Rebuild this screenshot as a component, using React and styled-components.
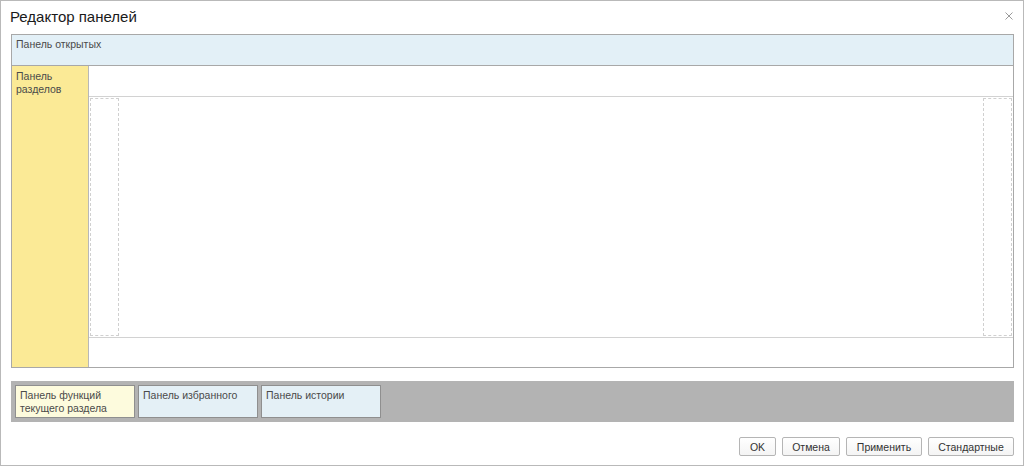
import React from 'react';
import styled, { createGlobalStyle } from 'styled-components';

const GlobalStyle = createGlobalStyle`
    html, body {
        margin: 0;
        padding: 0;
        background: #ffffff;
    }

    body {
        font-family: "Liberation Sans", Arial, sans-serif;
    }
`;

const Window = styled.div`
    box-sizing: border-box;
    width: 1024px;
    height: 466px;
    border: 1px solid #b9b9b9;
    background: #ffffff;
    display: flex;
    flex-direction: column;
`;

const TitleBar = styled.div`
    height: 32px;
    display: flex;
    align-items: center;
    justify-content: space-between;
    padding: 0 10px 0 9px;
    box-sizing: border-box;

    h1 {
        margin: 0;
        font-size: 15px;
        font-weight: normal;
        color: #1a1a1a;
        position: relative;
        top: -1px;
    }
`;

const CloseButton = styled.button`
    border: 0;
    background: none;
    padding: 0;
    width: 8px;
    height: 8px;
    display: flex;
    align-items: center;
    justify-content: center;
    position: relative;
    top: -1px;
    cursor: pointer;
`;

const Body = styled.div`
    padding: 1px 9px 0 10px;
    display: flex;
    flex-direction: column;
`;

const Editor = styled.div`
    box-sizing: border-box;
    height: 334px;
    border: 1px solid #a8a8a8;
    display: flex;
    flex-direction: column;
`;

const Label = styled.div`
    font-size: 10.5px;
    line-height: 12.5px;
    color: #4a4a4a;
`;

const OpenPanel = styled.div`
    box-sizing: border-box;
    height: 31px;
    background: #e3f0f7;
    border-bottom: 1px solid #a8a8a8;
    padding: 3px 4px;
`;

const Middle = styled.div`
    flex: 1;
    display: flex;
`;

const SectionsPanel = styled.div`
    box-sizing: border-box;
    width: 77px;
    background: #fbea96;
    border-right: 1px solid #b8b8b8;
    padding: 4px 4px;
`;

const Workspace = styled.div`
    flex: 1;
    display: flex;
    flex-direction: column;
`;

const Strip = styled.div`
    box-sizing: border-box;
    height: ${p => p.$height}px;
    border-${p => p.$side}: 1px solid #d2d2d2;
`;

const WorkArea = styled.div`
    flex: 1;
    display: flex;
    justify-content: space-between;
    padding: 1px;
`;

const SideSlot = styled.div`
    box-sizing: border-box;
    width: 29px;
    border: 1px dashed #d0d0d0;
`;

const BottomBar = styled.div`
    box-sizing: border-box;
    margin-top: 13px;
    height: 41px;
    background: #b3b3b3;
    padding: 4px;
    display: flex;
    gap: 3px;
`;

const Slot = styled.div`
    box-sizing: border-box;
    width: 120px;
    height: 33px;
    background: ${p => (p.$tone === 'yellow' ? '#fdfbdd' : '#e4f0f6')};
    border: 1px solid #8f8f8f;
    padding: 3px 4px;
`;

const Footer = styled.div`
    display: flex;
    justify-content: flex-end;
    gap: 6px;
    margin-top: 15px;
`;

const Button = styled.button`
    box-sizing: border-box;
    height: 19px;
    width: ${p => p.$width}px;
    padding: 0;
    font-family: "Liberation Sans", Arial, sans-serif;
    font-size: 10.5px;
    color: #333333;
    background: linear-gradient(#ffffff, #f4f4f4);
    border: 1px solid #b5b5b5;
    border-radius: 2px;
    cursor: pointer;
`;

const CloseIcon = () => (
    <svg width="8" height="8" viewBox="0 0 8 8">
        <path d="M0.5 0.5 L7.5 7.5 M7.5 0.5 L0.5 7.5" stroke="#9a9a9a" strokeWidth="1" fill="none" />
    </svg>
);

const App = () => {
    return (
        <>
            <GlobalStyle />
            <Window>
                <TitleBar>
                    <h1>Редактор панелей</h1>
                    <CloseButton aria-label="Закрыть">
                        <CloseIcon />
                    </CloseButton>
                </TitleBar>
                <Body>
                    <Editor>
                        <OpenPanel>
                            <Label>Панель открытых</Label>
                        </OpenPanel>
                        <Middle>
                            <SectionsPanel>
                                <Label>Панель<br />разделов</Label>
                            </SectionsPanel>
                            <Workspace>
                                <Strip $height={31} $side="bottom" />
                                <WorkArea>
                                    <SideSlot />
                                    <SideSlot />
                                </WorkArea>
                                <Strip $height={30} $side="top" />
                            </Workspace>
                        </Middle>
                    </Editor>
                    <BottomBar>
                        <Slot $tone="yellow">
                            <Label>Панель функций<br />текущего раздела</Label>
                        </Slot>
                        <Slot>
                            <Label>Панель избранного</Label>
                        </Slot>
                        <Slot>
                            <Label>Панель истории</Label>
                        </Slot>
                    </BottomBar>
                    <Footer>
                        <Button $width={37}>OK</Button>
                        <Button $width={58}>Отмена</Button>
                        <Button $width={76}>Применить</Button>
                        <Button $width={86}>Стандартные</Button>
                    </Footer>
                </Body>
            </Window>
        </>
    );
};

export default App;
